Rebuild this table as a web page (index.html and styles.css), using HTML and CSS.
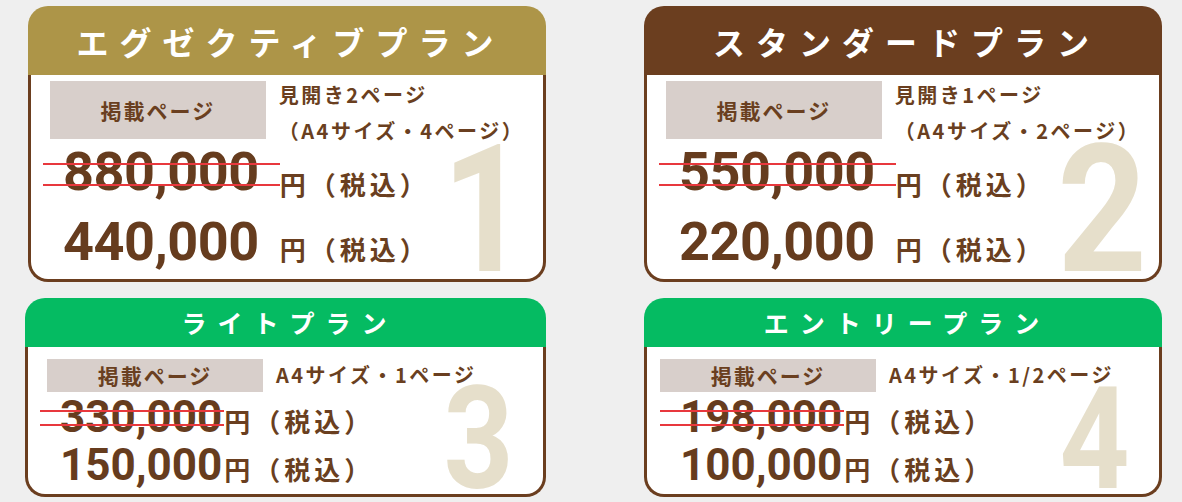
FILE: index.html
```html
<!DOCTYPE html>
<html lang="ja">
<head>
<meta charset="utf-8">
<title>掲載プラン</title>
<link rel="stylesheet" href="styles.css">
</head>
<body>
<main class="plans">
  <section class="card card-lg card-exec">
    <h2 class="card-head">エグゼクティブプラン</h2>
    <div class="card-body">
      <div class="big big-1">1</div>
      <div class="info">
        <div class="label">掲載ページ</div>
        <div class="spec"><p>見開き2ページ</p><p>（A4サイズ・4ページ）</p></div>
      </div>
      <div class="prices">
        <span class="num num-old">880,000</span><span class="unit unit-old">円（税込）</span>
        <span class="num">440,000</span><span class="unit">円（税込）</span>
      </div>
    </div>
  </section>

  <section class="card card-lg card-std">
    <h2 class="card-head">スタンダードプラン</h2>
    <div class="card-body">
      <div class="big big-2">2</div>
      <div class="info">
        <div class="label">掲載ページ</div>
        <div class="spec"><p>見開き1ページ</p><p>（A4サイズ・2ページ）</p></div>
      </div>
      <div class="prices">
        <span class="num num-old">550,000</span><span class="unit unit-old">円（税込）</span>
        <span class="num">220,000</span><span class="unit">円（税込）</span>
      </div>
    </div>
  </section>

  <section class="card card-sm card-light">
    <h2 class="card-head">ライトプラン</h2>
    <div class="card-body">
      <div class="big big-3">3</div>
      <div class="info">
        <div class="label">掲載ページ</div>
        <div class="spec"><p>A4サイズ・1ページ</p></div>
      </div>
      <div class="prices">
        <span class="num num-old">330,000</span><span class="unit unit-old">円（税込）</span>
        <span class="num">150,000</span><span class="unit">円（税込）</span>
      </div>
    </div>
  </section>

  <section class="card card-sm card-entry">
    <h2 class="card-head">エントリープラン</h2>
    <div class="card-body">
      <div class="big big-4">4</div>
      <div class="info">
        <div class="label">掲載ページ</div>
        <div class="spec"><p>A4サイズ・1/2ページ</p></div>
      </div>
      <div class="prices">
        <span class="num num-old">198,000</span><span class="unit unit-old">円（税込）</span>
        <span class="num">100,000</span><span class="unit">円（税込）</span>
      </div>
    </div>
  </section>
</main>
</body>
</html>
```

FILE: styles.css
```css
* {
  box-sizing: border-box;
  margin: 0;
  padding: 0;
}

body {
  width: 1182px;
  height: 502px;
  overflow: hidden;
  background: #efefef;
  font-family: "Noto Sans CJK JP", sans-serif;
  color: #6a3f20;
}

.plans {
  display: grid;
  grid-template-columns: 518px 518px;
  grid-template-rows: 276px 199px;
  column-gap: 98px;
  row-gap: 16px;
  padding: 6px 0 0 28px;
}

.card {
  position: relative;
  display: flex;
  flex-direction: column;
}

.card-light {
  margin-left: -3px;
}

.card-head {
  display: flex;
  align-items: center;
  justify-content: center;
  border-radius: 20px 20px 0 0;
  color: #fff;
  font-weight: 700;
  line-height: 1;
}

.card-exec .card-head { background: #ad9548; }
.card-std .card-head { background: #6b3e1f; }
.card-light .card-head,
.card-entry .card-head { background: #05bb62; }

.card-lg .card-head {
  height: 69px;
  font-size: 32px;
  letter-spacing: 11px;
  padding-left: 7px;
}

.card-sm .card-head {
  height: 49px;
  font-size: 25px;
  letter-spacing: 11px;
  padding-left: 8px;
}

.card-body {
  position: relative;
  flex: 1;
  background: #fff;
  border: 3px solid #6b3e1f;
  border-top: 0;
  border-radius: 0 0 20px 20px;
  padding: 6px 19px 0;
}

.card-entry .card-body {
  padding-left: 13px;
}

.info {
  position: relative;
  display: flex;
  align-items: center;
  gap: 13px;
}

.card-lg .info {
  height: 58px;
  align-items: flex-start;
}

.label {
  width: 216px;
  display: flex;
  align-items: center;
  justify-content: center;
  background: #d8cfcb;
  font-weight: 700;
  font-size: 21px;
  letter-spacing: 2px;
}

.card-lg .label { height: 58px; }
.card-sm .label { height: 33px; margin-top: 4px; }

.spec {
  font-weight: 700;
  font-size: 20px;
  letter-spacing: 2.5px;
  line-height: 36px;
}

.card-lg .spec { margin-top: -4px; }
.card-sm .spec { margin-top: 4px; }

.prices {
  position: relative;
  display: grid;
  grid-template-columns: auto 1fr;
  align-items: baseline;
  padding-left: 13px;
}

.card-lg .prices {
  margin-top: 6px;
  row-gap: 16px;
}

.card-sm .prices {
  margin-top: 0;
}

.card-entry .prices {
  padding-left: 20px;
}

.num {
  position: relative;
  font-family: Roboto, sans-serif;
  font-weight: 700;
  line-height: 1;
  color: #663c1e;
}

.card-lg .num {
  font-size: 54px;
  letter-spacing: -0.5px;
  padding-right: 21px;
}

.card-sm .num {
  font-size: 44px;
  line-height: 48px;
  padding-right: 2px;
}

.num-old::before,
.num-old::after {
  content: "";
  position: absolute;
  left: -20px;
  right: 0;
  height: 2px;
  background: #e8383d;
}

.card-lg .num-old::before { top: 0.33em; }
.card-lg .num-old::after { top: 0.73em; }

.card-sm .num-old::before { top: 0.38em; }
.card-sm .num-old::after { top: 0.7em; }

.unit {
  font-weight: 700;
  font-size: 26px;
  letter-spacing: 4px;
  line-height: 1;
}

.card-lg .unit-old {
  transform: translateY(5px);
}

.big {
  position: absolute;
  font-family: Roboto, sans-serif;
  font-weight: 700;
  line-height: 1;
  color: #e6dfcb;
  transform: scaleX(0.83);
  transform-origin: right center;
}

.card-lg .big {
  font-size: 178px;
  top: 46px;
  right: 16px;
}

.card-lg .big-2 {
  right: 12px;
  transform: scaleX(0.88);
}

.card-sm .big {
  font-size: 142px;
  top: 22px;
  right: 30px;
  transform: scaleX(0.86);
}
```
